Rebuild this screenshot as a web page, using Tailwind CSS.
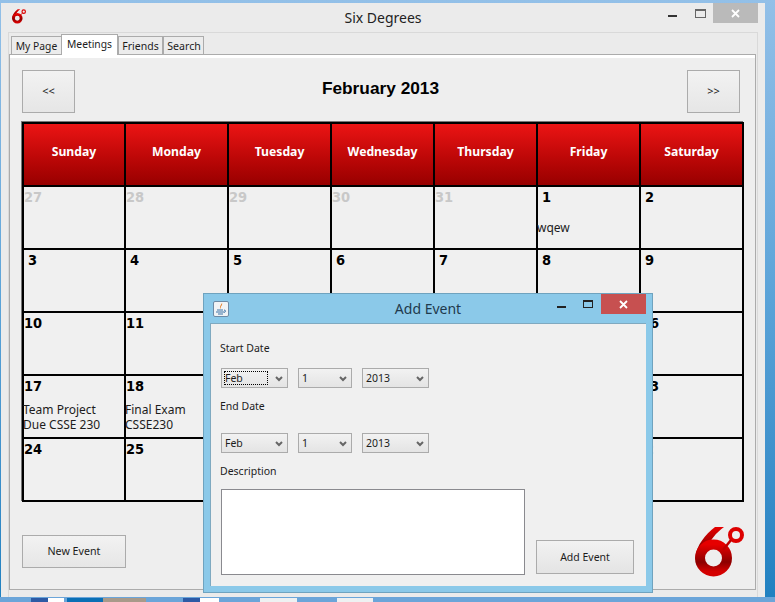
<!DOCTYPE html>
<html lang="en">
<head>
  <meta charset="UTF-8">
  <title>Six Degrees</title>
  <script src="https://cdn.jsdelivr.net/npm/@tailwindcss/browser@4"></script>
</head>
<body class="relative w-[775px] h-[602px] overflow-hidden bg-gradient-to-b from-[#93c0e8] via-[#5aa3d8] to-[#1e80c0] font-['Noto_Sans',sans-serif] text-[#1c1c1c]">

  <!-- Shared logo -->
  <svg width="0" height="0" class="absolute">
    <defs>
      <linearGradient id="logoRed" x1="0" y1="0" x2="0" y2="1">
        <stop offset="0" stop-color="#e60000"/>
        <stop offset="0.65" stop-color="#8c0000"/>
        <stop offset="1" stop-color="#d40000"/>
      </linearGradient>
      <symbol id="logo" viewBox="0 0 49 50">
        <path fill="url(#logoRed)" d="M0.5 29 C2 18 10 8 20 0 L29 0 C21 6 15 13 13 20 L0.5 33 Z"/>
        <circle cx="18.5" cy="31" r="13.5" fill="none" stroke="url(#logoRed)" stroke-width="10"/>
        <circle cx="41" cy="8" r="6" fill="none" stroke="#dd0000" stroke-width="4"/>
        <path d="M36 13 L28 23" stroke="#c00000" stroke-width="2.5"/>
      </symbol>
    </defs>
  </svg>

  <!-- Thumbnails of the desktop behind -->
  <div class="absolute left-0 right-0 bottom-0 h-[5px] bg-[#6ba5d9]">
    <div class="absolute left-[31px] top-[1px] w-[17px] h-[4px] bg-[#2d5aa5]"></div>
    <div class="absolute left-[48px] top-[1px] w-[16px] h-[4px] bg-white"></div>
    <div class="absolute left-[67px] top-[1px] w-[36px] h-[4px] bg-[#0a6fb5]"></div>
    <div class="absolute left-[103px] top-[1px] w-[43px] h-[4px] bg-[#a89a8a]"></div>
    <div class="absolute left-[183px] top-[1px] w-[17px] h-[4px] bg-[#2d5aa5]"></div>
    <div class="absolute left-[200px] top-[1px] w-[19px] h-[4px] bg-white"></div>
    <div class="absolute left-[260px] top-[1px] w-[37px] h-[4px] bg-[#eef1f2]"></div>
    <div class="absolute left-[337px] top-[1px] w-[36px] h-[4px] bg-[#eef1f2]"></div>
  </div>

  <!-- Main window -->
  <div class="absolute left-[1px] top-[3px] w-[764px] h-[594px] bg-[#ebebeb] flex flex-col">
    <div class="h-[29px] flex items-center relative shrink-0">
      <svg class="absolute left-[11px] top-[6px]" width="14" height="15"><use href="#logo"/></svg>
      <span class="w-full text-center text-[14px] text-[#222]">Six Degrees</span>
      <div class="absolute left-[667px] top-[12px] w-[9px] h-[2px] bg-[#333]"></div>
      <div class="absolute left-[694px] top-[6px] w-[11px] h-[9px] border border-[#666] border-t-2"></div>
      <div class="absolute left-[712px] top-0 w-[45px] h-[20px] bg-[#bababa] flex items-center justify-center">
        <svg width="9" height="9" viewBox="0 0 9 9"><path d="M1 1 L8 8 M8 1 L1 8" stroke="#fff" stroke-width="1.8"/></svg>
      </div>
    </div>

    <!-- Tab pane -->
    <div class="ml-[7px] w-[750px] h-[565px] border border-[#d9d9d9] border-b-0 flex flex-col">
      <div class="flex items-end h-[21px] pl-[2px] text-[10.3px] text-center">
        <div class="w-[51px] h-[18px] leading-[18px] border border-[#ababab] border-b-0 bg-[#ececec]">My Page</div>
        <div class="w-[57px] h-[21px] leading-[19px] border border-[#ababab] border-b-0 bg-white -ml-px -mb-px relative z-10">Meetings</div>
        <div class="w-[45px] h-[18px] leading-[18px] border border-[#ababab] border-b-0 bg-[#ececec] text-[10.5px]">Friends</div>
        <div class="w-[41px] h-[18px] leading-[18px] border border-[#ababab] border-b-0 bg-[#ececec] text-[10.6px] pl-[1px]">Search</div>
      </div>
      <div class="w-[747px] h-[536px] border border-[#ababab] bg-[#eeeeee]">
        <div class="h-[3px] bg-white"></div>
        <div class="pl-[12px] pr-[15px] pt-[12px] flex justify-between items-center">
          <button class="w-[53px] h-[43px] border border-[#ababab] bg-gradient-to-b from-[#f2f2f2] to-[#e6e6e6] text-[11px]">&lt;&lt;</button>
          <h1 class="font-['Liberation_Sans',sans-serif] font-bold text-[17.3px] text-black -mt-[5px] -ml-[1px]">February 2013</h1>
          <button class="w-[53px] h-[43px] border border-[#ababab] bg-gradient-to-b from-[#f2f2f2] to-[#e6e6e6] text-[11px]">&gt;&gt;</button>
        </div>

        <!-- Calendar -->
        <div id="calendar" class="ml-[12px] mt-[9px] w-[722px] grid grid-cols-[102px_repeat(6,103px)] auto-rows-[63px] border-l-2 border-t-2 border-black shadow-[-1px_-1px_0_#777]"></div>

        <div class="pl-[12px] pr-[11px] flex justify-between items-start">
          <button class="mt-[33px] w-[104px] h-[33px] border border-[#ababab] bg-gradient-to-b from-[#f2f2f2] to-[#e6e6e6] text-[10.7px]">New Event</button>
          <svg class="mt-[25px]" width="49" height="50"><use href="#logo"/></svg>
        </div>
      </div>
    </div>
  </div>

  <!-- Add Event dialog -->
  <div class="absolute left-[203px] top-[293px] w-[450px] h-[300px] bg-[#8bc9e9] border border-[#6fa3bf] flex flex-col">
    <div class="h-[29px] relative shrink-0">
      <svg class="absolute left-[9px] top-[7px]" width="16" height="16" viewBox="0 0 16 16">
        <rect x="0.5" y="0.5" width="15" height="15" rx="1.5" fill="#f1f3f5" stroke="#6d8aa5"/>
        <path d="M9 2 C10 4 7 5 8 8 C6 6 8 4 9 2 Z" fill="#e2791c"/>
        <path d="M4 9 H10 M3 11 H11 M5 13 H10" stroke="#3f74a8" stroke-width="1.2"/>
        <path d="M11 9 C13 9 13 11 11 11.5" fill="none" stroke="#3f74a8"/>
      </svg>
      <div class="text-center text-[14px] leading-[30px] text-[#1f3a4d]">Add Event</div>
      <div class="absolute left-[353px] top-[12px] w-[9px] h-[2px] bg-[#222]"></div>
      <div class="absolute left-[379px] top-[6px] w-[10px] h-[8px] border border-[#222] border-t-2"></div>
      <div class="absolute left-[397px] top-0 w-[45px] h-[20px] bg-[#c75050] flex items-center justify-center">
        <svg width="9" height="9" viewBox="0 0 9 9"><path d="M1 1 L8 8 M8 1 L1 8" stroke="#fff" stroke-width="1.8"/></svg>
      </div>
    </div>
    <div class="ml-[6px] w-[436px] h-[263px] bg-[#f0f0f0] border-l border-t border-[#7fa9c0] pl-[9px] text-[10.5px]">
      <div class="mt-[17px] h-[14px] leading-[14px]">Start Date</div>
      <div class="mt-[13px] ml-[1px] flex gap-[10px]">
        <div class="w-[67px] h-[20px] border border-[#ababab] bg-gradient-to-b from-[#f2f2f2] to-[#e4e4e4] flex items-center justify-between pl-[2px] pr-[4px]">
          <span class="w-[44px] h-[14px] leading-[15px] outline-1 outline-dotted outline-black -outline-offset-1 pl-px">Feb</span>
          <svg class="mt-[2px]" width="8" height="6" viewBox="0 0 8 6"><path d="M1 1 L4 4 L7 1" fill="none" stroke="#666" stroke-width="2"/></svg>
        </div>
        <div class="w-[54px] h-[20px] border border-[#ababab] bg-gradient-to-b from-[#f2f2f2] to-[#e4e4e4] flex items-center justify-between pl-[3px] pr-[4px] pt-[2px]">
          <span>1</span>
          <svg width="8" height="6" viewBox="0 0 8 6"><path d="M1 1 L4 4 L7 1" fill="none" stroke="#666" stroke-width="2"/></svg>
        </div>
        <div class="w-[67px] h-[20px] border border-[#ababab] bg-gradient-to-b from-[#f2f2f2] to-[#e4e4e4] flex items-center justify-between pl-[3px] pr-[4px] pt-[2px]">
          <span>2013</span>
          <svg width="8" height="6" viewBox="0 0 8 6"><path d="M1 1 L4 4 L7 1" fill="none" stroke="#666" stroke-width="2"/></svg>
        </div>
      </div>
      <div class="mt-[11px] h-[14px] leading-[14px]">End Date</div>
      <div class="mt-[20px] ml-[1px] flex gap-[10px]">
        <div class="w-[67px] h-[20px] border border-[#ababab] bg-gradient-to-b from-[#f2f2f2] to-[#e4e4e4] flex items-center justify-between pl-[3px] pr-[4px] pt-[2px]">
          <span>Feb</span>
          <svg width="8" height="6" viewBox="0 0 8 6"><path d="M1 1 L4 4 L7 1" fill="none" stroke="#666" stroke-width="2"/></svg>
        </div>
        <div class="w-[54px] h-[20px] border border-[#ababab] bg-gradient-to-b from-[#f2f2f2] to-[#e4e4e4] flex items-center justify-between pl-[3px] pr-[4px] pt-[2px]">
          <span>1</span>
          <svg width="8" height="6" viewBox="0 0 8 6"><path d="M1 1 L4 4 L7 1" fill="none" stroke="#666" stroke-width="2"/></svg>
        </div>
        <div class="w-[67px] h-[20px] border border-[#ababab] bg-gradient-to-b from-[#f2f2f2] to-[#e4e4e4] flex items-center justify-between pl-[3px] pr-[4px] pt-[2px]">
          <span>2013</span>
          <svg width="8" height="6" viewBox="0 0 8 6"><path d="M1 1 L4 4 L7 1" fill="none" stroke="#666" stroke-width="2"/></svg>
        </div>
      </div>
      <div class="mt-[11px] h-[14px] leading-[14px]">Description</div>
      <div class="mt-[11px] ml-[1px] flex items-end">
        <div class="w-[304px] h-[86px] bg-white border border-[#8a8a8f]"></div>
        <button class="ml-[11px] mb-px w-[98px] h-[34px] border border-[#ababab] bg-gradient-to-b from-[#f2f2f2] to-[#e4e4e4] pt-[2px]">Add Event</button>
      </div>
    </div>
  </div>

  <script>
    // Build the month grid
    const headers = ['Sunday', 'Monday', 'Tuesday', 'Wednesday', 'Thursday', 'Friday', 'Saturday'];
    const dates = [27, 28, 29, 30, 31, 1, 2];
    for (let d = 3; d <= 28; d++) dates.push(d);
    dates.push(1, 2);
    const events = { 5: 'wqew', 21: 'Team Project<br>Due CSSE 230', 22: 'Final Exam<br>CSSE230' };

    let html = headers.map(h =>
      `<div class="border-r-2 border-b-2 border-black bg-gradient-to-b from-[#ec1414] to-[#980000] flex items-center justify-center pb-[4px] text-white font-bold text-[12.2px]">${h}</div>`
    ).join('');

    dates.forEach((d, i) => {
      const muted = i < 5 || i > 32;
      // cells fully under the dialog show no date
      const covered = i >= 14 && i % 7 >= 2 && i % 7 <= 5;
      html += `<div class="border-r-2 border-b-2 border-black bg-[#f0f0f0] flex flex-col whitespace-nowrap">
        <div class="h-[20px] leading-[20px] font-bold text-[14.5px] font-['DejaVu_Sans_Condensed','DejaVu_Sans',sans-serif] ${muted ? 'text-[#c8c8c8]' : 'text-black'} ${d < 10 ? 'pl-[4px]' : ''}">${covered ? '' : d}</div>
        <div class="flex-1 flex items-center text-[12px] leading-[15px] -ml-px"><div>${events[i] || ''}</div></div>
      </div>`;
    });
    document.getElementById('calendar').innerHTML = html;
  </script>
</body>
</html>
